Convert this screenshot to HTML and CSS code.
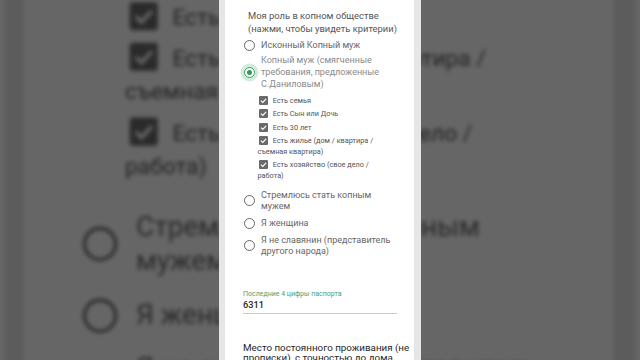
FILE: index.html
```html
<!DOCTYPE html>
<html lang="ru">
<head>
<meta charset="utf-8">
<title>Форма</title>
<link rel="stylesheet" href="styles.css">
</head>
<body>
<div class="stage">
  <div class="backdrop" aria-hidden="true">
    <div class="phone">
      <section class="card card-1">
        <div class="q-title">Моя роль в копном обществе<br>(нажми, чтобы увидеть критерии)</div>
        <div class="opts">
          <div class="opt opt-1"><span class="radio"></span><span>Исконный Копный муж</span></div>
          <div class="opt opt-sel"><span class="radio on"></span><span>Копный муж (смягченные<br>требования, предложенные<br>С.Даниловым)</span></div>
          <div class="checks">
            <div class="chk"><span class="box"><svg viewBox="0 0 10 10"><path d="M2.2 5.1 4.2 7.1 7.9 3.1"/></svg></span>Есть семья</div>
            <div class="chk"><span class="box"><svg viewBox="0 0 10 10"><path d="M2.2 5.1 4.2 7.1 7.9 3.1"/></svg></span>Есть Сын или Дочь</div>
            <div class="chk"><span class="box"><svg viewBox="0 0 10 10"><path d="M2.2 5.1 4.2 7.1 7.9 3.1"/></svg></span>Есть 30 лет</div>
            <div class="chk"><span class="box"><svg viewBox="0 0 10 10"><path d="M2.2 5.1 4.2 7.1 7.9 3.1"/></svg></span>Есть жилье (дом / квартира /<br>съемная квартира)</div>
            <div class="chk"><span class="box"><svg viewBox="0 0 10 10"><path d="M2.2 5.1 4.2 7.1 7.9 3.1"/></svg></span>Есть хозяйство (свое дело /<br>работа)</div>
          </div>
          <div class="opt opt-low"><span class="radio"></span><span>Стремлюсь стать копным<br>мужем</span></div>
          <div class="opt opt-low"><span class="radio"></span><span>Я женщина</span></div>
          <div class="opt opt-low"><span class="radio"></span><span>Я не славянин (представитель<br>другого народа)</span></div>
        </div>
        <div class="field">
          <div class="field-label">Последние 4 цифры паспорта</div>
          <div class="field-value">6311</div>
        </div>
      </section>
      <section class="card card-2">
        <div class="q2">Место постоянного проживания (не<br>прописки), с точностью до дома</div>
      </section>
    </div>
  </div>

  <div class="front">
    <div class="phone">
      <section class="card card-1">
        <div class="q-title">Моя роль в копном обществе<br>(нажми, чтобы увидеть критерии)</div>
        <div class="opts">
          <div class="opt opt-1"><span class="radio"></span><span>Исконный Копный муж</span></div>
          <div class="opt opt-sel"><span class="radio on"></span><span>Копный муж (смягченные<br>требования, предложенные<br>С.Даниловым)</span></div>
          <div class="checks">
            <div class="chk"><span class="box"><svg viewBox="0 0 10 10"><path d="M2.2 5.1 4.2 7.1 7.9 3.1"/></svg></span>Есть семья</div>
            <div class="chk"><span class="box"><svg viewBox="0 0 10 10"><path d="M2.2 5.1 4.2 7.1 7.9 3.1"/></svg></span>Есть Сын или Дочь</div>
            <div class="chk"><span class="box"><svg viewBox="0 0 10 10"><path d="M2.2 5.1 4.2 7.1 7.9 3.1"/></svg></span>Есть 30 лет</div>
            <div class="chk"><span class="box"><svg viewBox="0 0 10 10"><path d="M2.2 5.1 4.2 7.1 7.9 3.1"/></svg></span>Есть жилье (дом / квартира /<br>съемная квартира)</div>
            <div class="chk"><span class="box"><svg viewBox="0 0 10 10"><path d="M2.2 5.1 4.2 7.1 7.9 3.1"/></svg></span>Есть хозяйство (свое дело /<br>работа)</div>
          </div>
          <div class="opt opt-low"><span class="radio"></span><span>Стремлюсь стать копным<br>мужем</span></div>
          <div class="opt opt-low"><span class="radio"></span><span>Я женщина</span></div>
          <div class="opt opt-low"><span class="radio"></span><span>Я не славянин (представитель<br>другого народа)</span></div>
        </div>
        <div class="field">
          <div class="field-label">Последние 4 цифры паспорта</div>
          <div class="field-value">6311</div>
        </div>
      </section>
      <section class="card card-2">
        <div class="q2">Место постоянного проживания (не<br>прописки), с точностью до дома</div>
      </section>
    </div>
  </div>
</div>
</body>
</html>
```

FILE: styles.css
```css
html, body {
  margin: 0;
  padding: 0;
  background: #666666;
}

body {
  font-family: Roboto, "Noto Sans", "DejaVu Sans", sans-serif;
}

.stage {
  position: relative;
  width: 640px;
  height: 360px;
  overflow: hidden;
  background: #666666;
}

.backdrop {
  position: absolute;
  inset: 0;
  display: flex;
  justify-content: center;
  transform: scale(3.12);
  transform-origin: 320px 180px;
  filter: brightness(0.4) blur(0.6px);
}

.front {
  position: relative;
  display: flex;
  justify-content: center;
  height: 360px;
}

.phone {
  width: 202px;
  height: 420px;
  box-sizing: border-box;
  padding: 0 7px 0 6px;
  background: #e6e6e6;
}

.card {
  background: #ffffff;
}

.card-1 {
  padding: 10px 17px 14px 23px;
}

.q-title {
  font-size: 9.4px;
  line-height: 12.5px;
  color: #555555;
}

.opts {
  margin: 5px 0 0 -4px;
}

.opt {
  display: flex;
  align-items: center;
  gap: 6px;
  font-size: 9px;
  line-height: 10.6px;
  color: #666666;
}

.opt-1 {
  line-height: 11px;
}

.opt-sel {
  margin-top: 4.3px;
  line-height: 11.7px;
  color: #8a8a8a;
}

.opt-low {
  margin-top: 6.5px;
}

.checks + .opt-low {
  margin-top: 8.5px;
}

.radio {
  flex: none;
  width: 11px;
  height: 11px;
  box-sizing: border-box;
  border: 1.3px solid #676767;
  border-radius: 50%;
  display: flex;
  align-items: center;
  justify-content: center;
}

.radio.on {
  border-color: #2f9a58;
  box-shadow: 0 0 0 3.5px rgba(52, 168, 96, 0.22);
}

.radio.on::after {
  content: "";
  width: 5px;
  height: 5px;
  border-radius: 50%;
  background: #2f9a58;
}

.checks {
  margin: 5.6px 0 0 13.5px;
}

.chk {
  font-size: 7.3px;
  line-height: 10.5px;
  color: #555555;
  margin-bottom: 2.5px;
}

.box {
  display: inline-block;
  width: 9px;
  height: 9px;
  margin: 0 5px 0 1.2px;
  vertical-align: -1.6px;
  background: #6a6a6a;
  border-radius: 1px;
}

.box svg {
  display: block;
  width: 9px;
  height: 9px;
}

.box path {
  fill: none;
  stroke: #ffffff;
  stroke-width: 1.3;
}

.field {
  margin: 34px 0 0 -5px;
}

.field-label {
  font-size: 7px;
  line-height: 9px;
  color: #4f9e6b;
}

.field-value {
  font-size: 9.2px;
  line-height: 11px;
  font-weight: 500;
  color: #262626;
  padding-bottom: 2.5px;
  border-bottom: 1.5px solid #c4cfc8;
}

.card-2 {
  padding: 15px 4px 10px 18px;
}

.q2 {
  font-size: 9.8px;
  line-height: 10.5px;
  color: #262626;
  white-space: nowrap;
}
```
